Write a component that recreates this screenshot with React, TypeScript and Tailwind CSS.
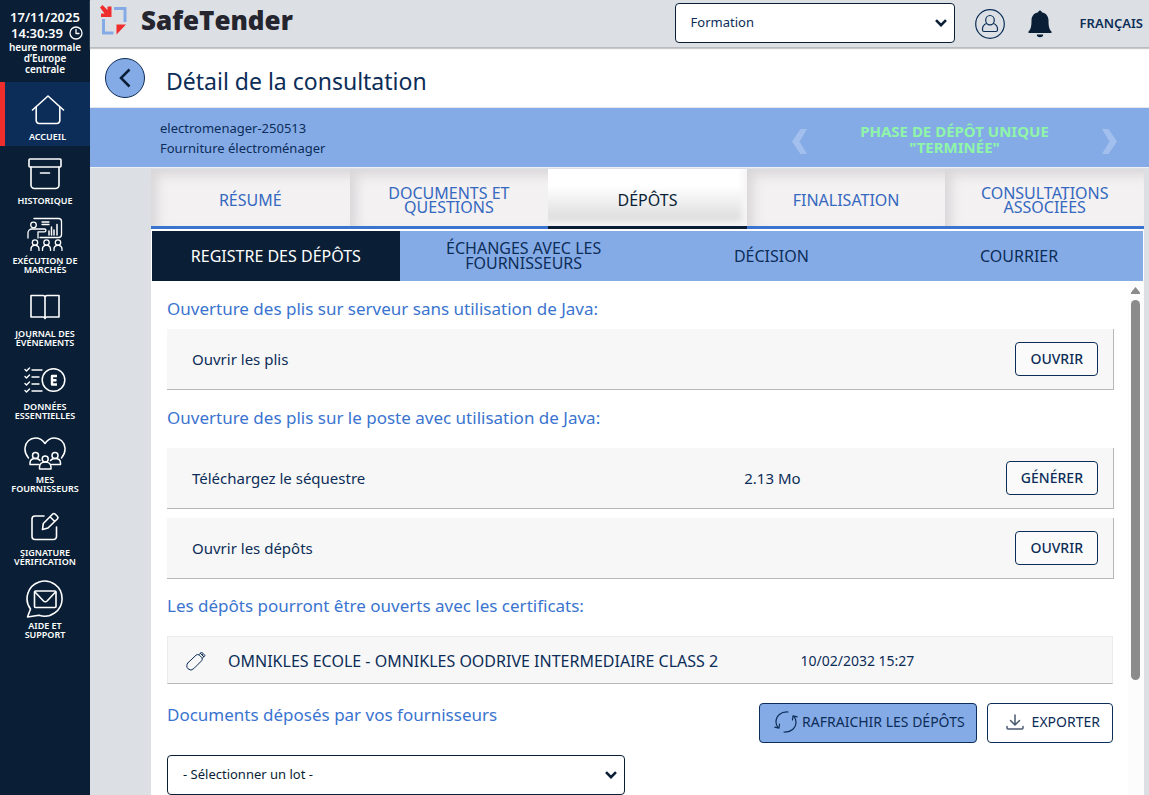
import type { ReactNode } from "react";

const line = {
  fill: "none",
  stroke: "currentColor",
  strokeLinecap: "round" as const,
  strokeLinejoin: "round" as const,
};

function HomeIcon() {
  return (
    <svg width="34" height="32" viewBox="0 0 34 32" {...line} strokeWidth="1.600" aria-hidden="true">
      <path d="M1.500 16 17 2l15.500 14" />
      <path d="M5.200 13V26.500a3 3 0 0 0 3 3h17.600a3 3 0 0 0 3-3V13" />
    </svg>
  );
}

function ArchiveIcon() {
  return (
    <svg width="34" height="32" viewBox="0 0 34 32" {...line} strokeWidth="1.600" aria-hidden="true">
      <rect x="1" y="1" width="32" height="8" rx="1" />
      <path d="M3 9v18a3.500 3.500 0 0 0 3.500 3.500h21A3.500 3.500 0 0 0 31 27V9M12.500 15h9" />
    </svg>
  );
}

function Person({ x, y }: { x: number; y: number }) {
  return (
    <g transform={`translate(${x} ${y})`}>
      <circle cx="4.500" cy="3" r="2.700" />
      <path d="M0.500 11V9.500a3.700 3.700 0 0 1 3-3.700h2a3.700 3.700 0 0 1 3 3.700V11" />
    </g>
  );
}

function TrainingIcon() {
  return (
    <svg width="36" height="34" viewBox="0 0 36 34" {...line} strokeWidth="1.300" aria-hidden="true">
      <path d="M7 1.500h24.500a3 3 0 0 1 3 3v13a3 3 0 0 1-3 3H13M15 5h7M15 7.500h7" />
      <path d="M22 18v-4M24.500 18v-8M27 18v-5M30 18V7.500" strokeWidth="1.500" />
      <circle cx="6.500" cy="8" r="2.800" />
      <path d="M1 21v-5a4 4 0 0 1 4-4h12.500a1.300 1.300 0 0 1 0 2.800H11V21" />
      <Person x={3.500} y={22.500} />
      <Person x={15} y={22.500} />
      <Person x={26.500} y={22.500} />
    </svg>
  );
}

function BookIcon() {
  return (
    <svg width="30" height="26" viewBox="0 0 30 26" {...line} strokeWidth="1.600" aria-hidden="true">
      <path d="M1 1.500h12A2 2 0 0 1 15 3.500v21a2 2 0 0 0-2-1.500H1zM29 1.500H17A2 2 0 0 0 15 3.500v21a2 2 0 0 1 2-1.500h12z" />
    </svg>
  );
}

function ChecklistIcon() {
  return (
    <svg width="42" height="26" viewBox="0 0 42 26" {...line} strokeWidth="1.400" aria-hidden="true">
      <circle cx="29.500" cy="13" r="11.300" strokeWidth="1.500" />
      <path d="M1 2.500 2.500 4l3-3M1 9.500 2.500 11l3-3M1 16.500 2.500 18l3-3M1 23.500 2.500 25l3-3M8 3h10M8 10h7M8 17h7M8 24h10" />
      <path d="M33 9h-5v8.500h5M28 13.200h4.500" strokeWidth="2.400" strokeLinecap="butt" />
    </svg>
  );
}

function HeartPeopleIcon() {
  return (
    <svg width="42" height="33" viewBox="0 0 42 33" {...line} strokeWidth="1.500" aria-hidden="true">
      <path d="M4.500 21C1 17 .8 13.500 1 11 1.500 5 6 1 11.500 1c4 0 7.500 2.500 9.500 5.500C23 3.500 26.500 1 30.500 1 36 1 40.500 5 41 11c.2 2.500 0 6-3.500 10" />
      <circle cx="11.500" cy="18.500" r="3" />
      <path d="M15 27.500H6V26c0-3 2.500-4.500 5.500-4.500 2 0 3.500.5 4.500 2" />
      <circle cx="31" cy="18.500" r="3" />
      <path d="M27.500 27.500h9V26c0-3-2.500-4.500-5.500-4.500-2 0-3.500.5-4.500 2" />
      <circle cx="21.200" cy="22" r="3" />
      <path d="M15.500 32v-2c0-3 2.500-5 5.700-5s5.800 2 5.800 5v2z" />
    </svg>
  );
}

function SignIcon() {
  return (
    <svg width="30" height="29" viewBox="0 0 30 29" {...line} strokeWidth="1.600" aria-hidden="true">
      <path d="M14 4H5a3 3 0 0 0-3 3v17.500a3 3 0 0 0 3 3h18.500a3 3 0 0 0 3-3V15" />
      <path d="M22.500 2.200a2 2 0 0 1 2.800 0l2 2a2 2 0 0 1 0 2.800L18 16l-5.500 1.500.8-6zM20 4.800l4.500 4.500" />
    </svg>
  );
}

function MailBubbleIcon() {
  return (
    <svg width="38" height="38" viewBox="0 0 38 38" {...line} strokeWidth="1.600" aria-hidden="true">
      <path d="M4.500 29a17.500 17.500 0 1 1 8.500 6.200L1.500 37z" />
      <rect x="8.500" y="11" width="21.500" height="16.500" rx="1" />
      <path d="m9 12 8.500 9a2.500 2.500 0 0 0 3.600 0l8.400-9" />
    </svg>
  );
}

type MenuItem = { label: string; icon: ReactNode; active?: boolean; tall?: boolean };

const menu: MenuItem[] = [
  { label: "ACCUEIL", icon: <HomeIcon />, active: true },
  { label: "HISTORIQUE", icon: <ArchiveIcon /> },
  { label: "EXÉCUTION DE\nMARCHÉS", icon: <TrainingIcon />, tall: true },
  { label: "JOURNAL DES\nÉVÉNEMENTS", icon: <BookIcon />, tall: true },
  { label: "DONNÉES\nESSENTIELLES", icon: <ChecklistIcon />, tall: true },
  { label: "MES\nFOURNISSEURS", icon: <HeartPeopleIcon />, tall: true },
  { label: "SIGNATURE\nVÉRIFICATION", icon: <SignIcon />, tall: true },
  { label: "AIDE ET\nSUPPORT", icon: <MailBubbleIcon />, tall: true },
];

function Sidebar() {
  return (
    <aside className="w-[90px] shrink-0 bg-[#0a1f36] text-white">
      <div className="h-[82px] pt-[9px] text-center">
        <p className="text-[13px] leading-4 font-semibold">17/11/2025</p>
        <p className="flex items-center justify-center gap-[6px] pl-1 text-[13px] leading-4 font-semibold">
          14:30:39
          <svg width="14" height="14" viewBox="0 0 14 14" {...line} strokeWidth="1.300" aria-hidden="true">
            <circle cx="7" cy="7" r="6" />
            <path d="M7 3.500V7.500h3" />
          </svg>
        </p>
        <p className="pt-px text-[10px] leading-[11px] font-semibold whitespace-pre-line">
          {"heure normale\nd’Europe\ncentrale"}
        </p>
      </div>
      <nav aria-label="Menu principal">
        {menu.map((item) => (
          <a
            key={item.label}
            href="#"
            className={`flex flex-col items-center justify-end gap-[2px] ${
              item.active ? "border-l-[5px] border-[#f02d2d] bg-[#0c2d57]" : ""
            } ${item.tall ? "h-[73px] pb-[9px]" : "h-16 pb-[5px]"}`}
          >
            <span className="flex h-10 items-center">{item.icon}</span>
            <span className="text-center text-[9px] leading-[9px] font-semibold whitespace-pre">{item.label}</span>
          </a>
        ))}
      </nav>
    </aside>
  );
}

function SelectArrow() {
  return (
    <svg
      className="pointer-events-none absolute top-1/2 right-2 -translate-y-1/2"
      width="12"
      height="8"
      viewBox="0 0 12 8"
      fill="none"
      stroke="#0a1f36"
      strokeWidth="2.600"
      aria-hidden="true"
    >
      <path d="m1 1.200 5 5 5-5" />
    </svg>
  );
}

function Header() {
  return (
    <header className="relative z-10 flex h-12 shrink-0 items-start border-b border-[#b9bcbe] bg-[#dce0e4] pr-[6px] pl-[10px] shadow-[0_1px_1px_#c9c9c9]">
      <a href="#" className="flex items-center gap-[14px] pt-[5px]" aria-label="SafeTender">
        <svg width="27" height="30" viewBox="0 0 27 30" aria-hidden="true">
          <path d="M14 3.500h11V17" fill="none" stroke="#85abe7" strokeWidth="3" />
          <path d="M3.500 14v14h10" fill="none" stroke="#85abe7" strokeWidth="3" />
          <path d="M0 2.500 2.500 0l5 5V1.500h4V12H1V8.500h3.500z" fill="#f02d2d" />
          <path d="M16.500 19.500h9.500l-9.500 10z" fill="#f02d2d" />
        </svg>
        <span className="font-['Open_Sans',sans-serif] text-[26px] leading-[30px] font-extrabold text-[#25252f]">
          SafeTender
        </span>
      </a>
      <div className="relative mt-[3px] ml-auto w-[280px]">
        <select
          aria-label="Organisme"
          className="h-10 w-full appearance-none rounded border border-[#0a1f36] bg-white px-[15px] text-[13px] text-[#0c2d57]"
        >
          <option>Formation</option>
        </select>
        <SelectArrow />
      </div>
      <button type="button" aria-label="Mon compte" className="mt-[9px] ml-5">
        <svg width="30" height="30" viewBox="0 0 30 30" fill="none" stroke="#0c2d57" strokeWidth="1.200" aria-hidden="true">
          <circle cx="15" cy="15" r="14.300" />
          <ellipse cx="15" cy="11.200" rx="4.300" ry="4.700" />
          <path d="M11.500 14.500c-2.500 1-4 3-4 5.500v1a1.500 1.500 0 0 0 1.500 1.500h12a1.500 1.500 0 0 0 1.500-1.500v-1c0-2.500-1.500-4.500-4-5.500" />
        </svg>
      </button>
      <button type="button" aria-label="Notifications" className="mt-[10px] ml-[23px]">
        <svg width="24" height="28" viewBox="0 0 24 28" fill="#0a1f36" aria-hidden="true">
          <path d="M12 .5a1.800 1.800 0 0 1 1.800 1.700c4.200.8 6.700 4 6.700 8 0 6.500.8 9 3 11.300V23H.5v-1.500c2.200-2.300 3-4.800 3-11.300 0-4 2.500-7.200 6.700-8A1.800 1.800 0 0 1 12 .5zM8.800 24.500h6.400a3.200 2.800 0 0 1-6.400 0z" />
        </svg>
      </button>
      <button type="button" className="mt-[13px] ml-7 text-[13px] leading-5 font-semibold text-[#0c2d57]">
        FRANÇAIS
      </button>
    </header>
  );
}

function PhaseArrow({ next }: { next?: boolean }) {
  return (
    <button type="button" aria-label={next ? "Phase suivante" : "Phase précédente"} className="shrink-0">
      <svg width="17" height="26" viewBox="0 0 17 26" fill="#a3bfed" aria-hidden="true">
        <path d={next ? "M1 0h6.500l8.500 12.500L7.500 25H1l7.500-12.500z" : "M16 0H9.500L1 12.500 9.500 25H16L8.500 12.500z"} />
      </svg>
    </button>
  );
}

const tabs = [
  { label: "RÉSUMÉ" },
  { label: "DOCUMENTS ET QUESTIONS" },
  { label: "DÉPÔTS", active: true },
  { label: "FINALISATION" },
  { label: "CONSULTATIONS ASSOCIÉES" },
];

const subTabs = [
  { label: "REGISTRE DES DÉPÔTS", active: true },
  { label: "ÉCHANGES AVEC LES FOURNISSEURS" },
  { label: "DÉCISION" },
  { label: "COURRIER" },
];

function SectionTitle({ children }: { children: ReactNode }) {
  return <h2 className="text-[17px] leading-6 text-[#3a74cf]">{children}</h2>;
}

function ActionCard({ label, size, action }: { label: string; size?: string; action: string }) {
  return (
    <div className="flex h-[61px] items-center border-r border-b border-[#b8b8b8] bg-[#f7f7f7] pr-[15px] text-[15px] text-[#0c2d57]">
      <p className="w-[62%] pl-[25px]">{label}</p>
      <p>{size}</p>
      <button
        type="button"
        className="ml-auto h-[34px] rounded border border-[#0c2d57] bg-white/40 px-[14px] text-sm font-medium"
      >
        {action}
      </button>
    </div>
  );
}

export default function App() {
  return (
    <div className="flex h-screen overflow-hidden bg-[#dce0e4] font-['Noto_Sans',sans-serif]">
      <Sidebar />
      <div className="flex min-w-0 flex-1 flex-col">
        <Header />
        <div className="flex h-[60px] shrink-0 items-center gap-[21px] border-b border-[#e4e8ee] bg-white pl-[15px]">
          <button
            type="button"
            aria-label="Retour"
            className="flex size-10 items-center justify-center rounded-full border border-[#0c2d57] bg-[#85abe7]"
          >
            <svg width="12" height="20" viewBox="0 0 12 20" fill="none" stroke="#0a1f36" strokeWidth="2.500" aria-hidden="true">
              <path d="m10.500 1.500-8.500 8.500 8.500 8.500" />
            </svg>
          </button>
          <h1 className="pt-[6px] text-[23px] leading-8 text-[#0c2d57]">Détail de la consultation</h1>
        </div>
        <div className="flex h-[60px] shrink-0 items-center border-b border-[#edf0f5] bg-[#85abe7] pr-[31px] pl-[70px]">
          <div className="text-[13px] leading-5 text-[#0c2d57]">
            <p>electromenager-250513</p>
            <p>Fourniture électroménager</p>
          </div>
          <div className="ml-auto flex w-[327px] items-center justify-between pt-2">
            <PhaseArrow />
            <p className="pb-[6px] text-center text-[15px] leading-4 font-bold whitespace-pre text-[#8ff5a7]">
              {'PHASE DE DÉPÔT UNIQUE\n"TERMINÉE"'}
            </p>
            <PhaseArrow next />
          </div>
        </div>

        <main className="mt-px mr-[5px] ml-[61px] flex min-h-0 flex-1 flex-col bg-white">
          <nav aria-label="Consultation" className="grid shrink-0 grid-cols-5">
            {tabs.map((tab) => (
              <a
                key={tab.label}
                href="#"
                aria-current={tab.active ? "page" : undefined}
                className={`flex h-[60px] items-center justify-center border-b-[3px] px-7 pt-[5px] text-center text-base leading-[14px] ${
                  tab.active
                    ? "border-[#0a1f36] bg-linear-to-b from-white from-30% to-[#d6d6d6] text-[#0a1f36] shadow-[inset_-5px_-5px_6px_#f6f6f6]"
                    : "border-[#3a74cf] bg-[#f3f1f2] text-[#3568bf] shadow-[inset_6px_6px_12px_#d8d6d7,inset_-4px_-2px_4px_#f6f4f5]"
                }`}
              >
                {tab.label}
              </a>
            ))}
          </nav>
          <nav aria-label="Dépôts" className="mx-px mt-[2px] grid shrink-0 grid-cols-4">
            {subTabs.map((tab) => (
              <a
                key={tab.label}
                href="#"
                aria-current={tab.active ? "page" : undefined}
                className={`flex h-[50px] items-center justify-center px-8 text-center text-base leading-[15px] ${
                  tab.active ? "bg-[#0a1f36] text-white" : "bg-[#85abe7] text-[#0c2d57]"
                }`}
              >
                {tab.label}
              </a>
            ))}
          </nav>

          <div className="flex min-h-0 flex-1">
            <div className="min-w-0 flex-1 overflow-hidden pt-4 pr-[14px] pl-4">
              <section>
                <SectionTitle>Ouverture des plis sur serveur sans utilisation de Java:</SectionTitle>
                <div className="mt-2">
                  <ActionCard label="Ouvrir les plis" action="OUVRIR" />
                </div>
              </section>
              <section className="mt-4">
                <SectionTitle>Ouverture des plis sur le poste avec utilisation de Java:</SectionTitle>
                <div className="mt-[18px] flex flex-col gap-[9px]">
                  <ActionCard label="Téléchargez le séquestre" size="2.13 Mo" action="GÉNÉRER" />
                  <ActionCard label="Ouvrir les dépôts" action="OUVRIR" />
                </div>
              </section>
              <section className="mt-[15px]">
                <SectionTitle>Les dépôts pourront être ouverts avec les certificats:</SectionTitle>
                <div className="mt-[18px] mr-px flex h-12 items-center border border-[#ebebeb] border-b-[#b8b8b8] bg-[#f7f7f7] pt-[2px] text-[#0c2d57]">
                  <div className="flex w-[67%] items-center gap-[22px] pl-[18px] text-base">
                    <svg width="20" height="20" viewBox="0 0 20 20" {...line} strokeWidth="1" aria-hidden="true">
                      <path d="M1.800 12 10 4.200a2.600 2.600 0 0 1 3.400 0l2.200 2.200a2.600 2.600 0 0 1 0 3.400L7.800 17.600a4 4 0 0 1-6-5.600z" />
                      <path d="M13.200 3.500 15.500 1l3.600 3.600-2.600 2.300M14.500 2.500l3.300 3.300M15.800 3l1 1" />
                    </svg>
                    <span className="whitespace-nowrap">OMNIKLES ECOLE - OMNIKLES OODRIVE INTERMEDIAIRE CLASS 2</span>
                  </div>
                  <span className="text-sm">10/02/2032 15:27</span>
                </div>
              </section>
              <section className="mt-[19px] mr-px">
                <div className="flex items-start gap-[10px]">
                  <SectionTitle>Documents déposés par vos fournisseurs</SectionTitle>
                  <button
                    type="button"
                    className="ml-auto flex h-10 items-center gap-1 rounded border border-[#0c2d57] bg-[#85abe7] pr-[11px] pb-[2px] pl-[14px] text-sm text-[#0c2d57]"
                  >
                    <svg width="24" height="22" viewBox="0 0 24 22" {...line} strokeWidth="1.200" aria-hidden="true">
                      <path d="M14 1C7 .5 2 5 2 11c0 2 .8 4 2 5.500M.8 16.200l4.200 1 .5-4.200" />
                      <path d="M10 21c7 .5 12-4 12-10 0-2-.8-4-2-5.500M23.200 5.800l-4.200-1-.5 4.200" />
                    </svg>
                    RAFRAICHIR LES DÉPÔTS
                  </button>
                  <button
                    type="button"
                    className="flex h-10 items-center gap-2 rounded border border-[#0c2d57] bg-white pr-3 pb-[2px] pl-[18px] text-sm text-[#0c2d57]"
                  >
                    <svg className="text-[#4a5a70]" width="18" height="16" viewBox="0 0 18 16" {...line} strokeWidth="1.500" aria-hidden="true">
                      <path d="M9 1v9.500M4.500 6.500 9 11l4.500-4.500M1 12.500V14a1 1 0 0 0 1 1h14a1 1 0 0 0 1-1v-1.500" />
                    </svg>
                    EXPORTER
                  </button>
                </div>
                <div className="relative mt-3 w-[458px] max-w-full">
                  <select
                    aria-label="Lot"
                    className="h-10 w-full appearance-none rounded border border-[#0a1f36] bg-white px-[15px] text-[13px] text-[#0a1f36]"
                  >
                    <option>- Sélectionner un lot -</option>
                  </select>
                  <SelectArrow />
                </div>
              </section>
            </div>
            <div className="flex w-4 shrink-0 flex-col items-center gap-[6px] bg-[#fcfcfc] pt-[6px] pr-px" aria-hidden="true">
              <svg width="9" height="7" viewBox="0 0 9 7" fill="#8b8b8b">
                <path d="M4.500 0 9 5.500V7H0V5.500z" />
              </svg>
              <div className="h-[380px] w-[9px] rounded-full bg-[#8b8b8b]" />
            </div>
          </div>
        </main>
      </div>
    </div>
  );
}
